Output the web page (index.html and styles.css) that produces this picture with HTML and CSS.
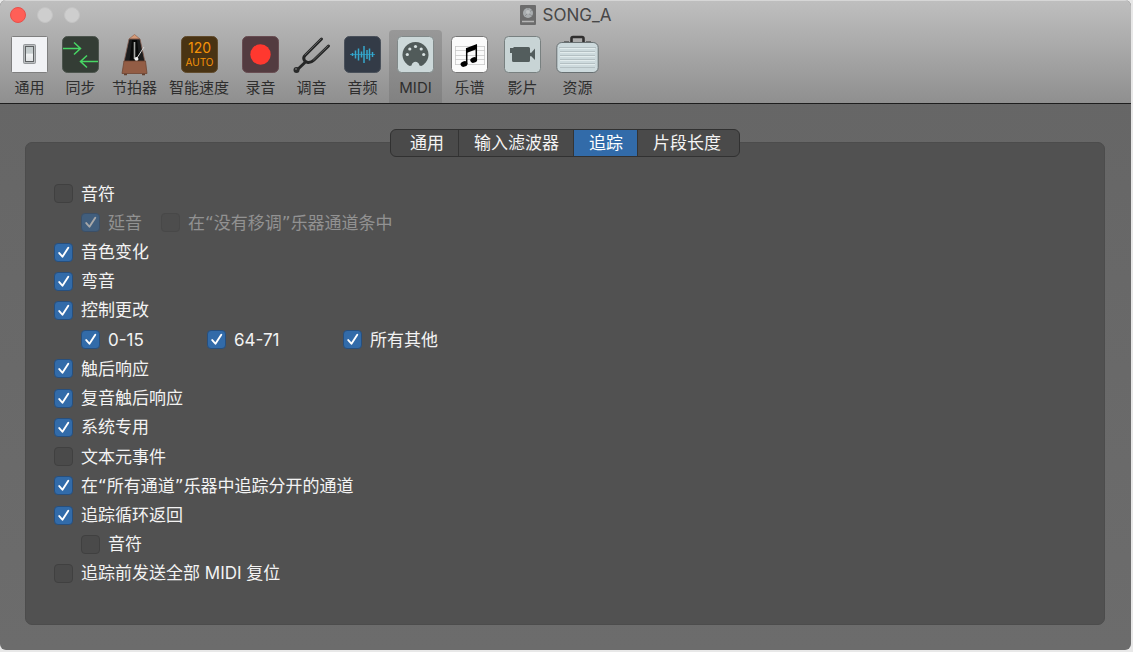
FILE: index.html
```html
<!DOCTYPE html>
<html lang="zh-CN">
<head>
<meta charset="utf-8">
<title>SONG_A</title>
<link rel="stylesheet" href="styles.css">
</head>
<body>
<main class="window">
  <header class="chrome">
    <div class="titlebar">
      <div class="lights">
        <button class="light light-close" type="button" aria-label="关闭"></button>
        <button class="light" type="button" aria-label="最小化"></button>
        <button class="light" type="button" aria-label="缩放"></button>
      </div>
      <h1 class="title">
        <svg class="title-icon" width="16" height="20" viewBox="0 0 16 20" aria-hidden="true">
          <rect width="16" height="20" rx="1" fill="#6c6c6c"/>
          <circle cx="8" cy="8" r="5" fill="#a9adaf"/>
          <path d="M8 3v5l4-3M8 8l-4 4M8 8l4 3" fill="none" stroke="#8d9092" stroke-width="1"/>
          <circle cx="8" cy="7" r="2" fill="#bfc2c3"/>
          <path d="M2 16.500h12" stroke="#b5b5b5" stroke-width="1.500"/>
        </svg>
        SONG_A
      </h1>
    </div>
    <nav class="toolbar" aria-label="偏好设置">
      <button class="tool" type="button">
        <svg class="tool-icon" viewBox="0 0 37 37" aria-hidden="true">
          <defs><linearGradient id="sw" x2="0" y2="1"><stop stop-color="#c4cccd"/><stop offset=".45" stop-color="#c8cfd0"/><stop offset=".5" stop-color="#f3f4f5"/><stop offset="1" stop-color="#e0e3e5"/></linearGradient></defs>
          <rect x=".5" y=".5" width="36" height="36" rx="1" fill="#f1f2f5" stroke="#7f7f7f"/>
          <rect x="12.500" y="8.500" width="12" height="19" rx="1" fill="#b9bcbe" stroke="#94979a"/>
          <rect x="14.500" y="10.500" width="8" height="15" fill="url(#sw)" stroke="#5d6062"/>
        </svg>
        <span class="tool-label">通用</span>
      </button>
      <button class="tool" type="button">
        <svg class="tool-icon" viewBox="0 0 37 37" aria-hidden="true">
          <rect x=".5" y=".5" width="36" height="36" rx="5" fill="#343d35" stroke="#4d554e"/>
          <path d="M1 12.500h17M12 6.500l6.500 6-6.500 6M36 25.500H19M25 19.500l-6.500 6 6.500 6" fill="none" stroke="#47d764" stroke-width="1.500"/>
        </svg>
        <span class="tool-label">同步</span>
      </button>
      <button class="tool" type="button">
        <svg class="tool-icon" viewBox="0 0 37 37" aria-hidden="true">
          <path d="M13 3l5.500-4.500L24 3z" fill="#d59a78" stroke="#8b5b43" stroke-width=".6"/>
          <path d="M13 3h11l5 23H8z" fill="#1b1c1d" stroke="#866154" stroke-width=".8"/>
          <path d="M16 4h5l2.500 21h-10z" fill="#070808"/>
          <path d="M18.500 6v17" stroke="#a5a6a4" stroke-width="1.600"/>
          <path d="M20 23.500L28 11" stroke="#d8d8d8" stroke-width="1"/>
          <circle cx="20.500" cy="23" r="2" fill="#eee"/>
          <path d="M8 25h21.500l1.500 12.500H6z" fill="#935d45" stroke="#704633" stroke-width=".8"/>
          <path d="M8 38.500h3M26 38.500h3" stroke="#63402f" stroke-width="1.500"/>
        </svg>
        <span class="tool-label">节拍器</span>
      </button>
      <button class="tool" type="button">
        <svg class="tool-icon" viewBox="0 0 37 37" aria-hidden="true">
          <rect x=".5" y=".5" width="36" height="36" rx="5" fill="#493313" stroke="#614b2d"/>
          <text class="tempo-number" x="18.500" y="17">120</text>
          <text class="tempo-mode" x="18.500" y="30">AUTO</text>
        </svg>
        <span class="tool-label">智能速度</span>
      </button>
      <button class="tool" type="button">
        <svg class="tool-icon" viewBox="0 0 37 37" aria-hidden="true">
          <rect x=".5" y=".5" width="36" height="36" rx="5" fill="#533b40" stroke="#684d52"/>
          <circle cx="18.500" cy="18.500" r="10.200" fill="#ff382f"/>
        </svg>
        <span class="tool-label">录音</span>
      </button>
      <button class="tool" type="button">
        <svg class="tool-icon" viewBox="0 0 37 37" aria-hidden="true">
          <g fill="none" stroke-linecap="round">
            <path d="M28.500 3L12 19.500C9.500 22 11 26 15 26.500c3 .3 4.500-1 6-2.500L35.500 10M13 25.500L4 34" stroke="#252626" stroke-width="3"/>
            <path d="M28 3L12 19M35 10L20.500 24" stroke="#717373" stroke-width=".7"/>
          </g>
          <circle cx="3.500" cy="34" r="3" fill="#292a2a"/>
          <circle cx="3" cy="33" r="1" fill="#696a6a"/>
        </svg>
        <span class="tool-label">调音</span>
      </button>
      <button class="tool" type="button">
        <svg class="tool-icon" viewBox="0 0 37 37" aria-hidden="true">
          <rect x=".5" y=".5" width="36" height="36" rx="5" fill="#333b47" stroke="#49505a"/>
          <path d="M6 18.500h25" stroke="#298aac" stroke-width="1"/>
          <path d="M8.500 17v3M11.500 14.500v8M14.500 12.500v12M17.500 15.500v6M20 10v17M23 14v9M25.500 12.500v12M28.500 16v5" stroke="#36a8cd" stroke-width="1.500"/>
        </svg>
        <span class="tool-label">音频</span>
      </button>
      <button class="tool tool-roomy tool-active" type="button" aria-current="page">
        <svg class="tool-icon" viewBox="0 0 37 37" aria-hidden="true">
          <rect x=".5" y=".5" width="36" height="36" rx="4" fill="#ccd8d9" stroke="#818989"/>
          <path d="M12.800 30A13 12.600 0 1 1 24.200 30L22.500 29.500C21.500 24.500 15.500 24.500 14.500 29.500z" fill="#515b5a"/>
          <g fill="#d6e0e0"><circle cx="10.300" cy="18.500" r="1.600"/><circle cx="12.800" cy="13" r="1.600"/><circle cx="18.500" cy="10.500" r="1.600"/><circle cx="24.200" cy="13" r="1.600"/><circle cx="26.700" cy="18.500" r="1.600"/></g>
        </svg>
        <span class="tool-label">MIDI</span>
      </button>
      <button class="tool tool-roomy" type="button">
        <svg class="tool-icon" viewBox="0 0 37 37" aria-hidden="true">
          <rect x=".5" y=".5" width="36" height="36" rx="4" fill="#fbfbfb" stroke="#777"/>
          <path d="M4 10.500h30M4 14.500h30M4 19.500h30M4 23.500h30M4 28.500h30M4.500 10v19M33.500 10v19" stroke="#c9c9c9" stroke-width=".8"/>
          <path d="M15.500 12L26 8v5l-10.500 4z" fill="#000"/>
          <path d="M15.700 12v16M25.300 9v14" stroke="#000" stroke-width="1.500"/>
          <ellipse cx="13" cy="28" rx="3.500" ry="2.700" transform="rotate(-18 13 28)"/>
          <ellipse cx="22.700" cy="24" rx="3.500" ry="2.700" transform="rotate(-18 22.700 24)"/>
        </svg>
        <span class="tool-label">乐谱</span>
      </button>
      <button class="tool tool-roomy" type="button">
        <svg class="tool-icon" viewBox="0 0 37 37" aria-hidden="true">
          <rect x=".5" y=".5" width="36" height="36" rx="4" fill="#c8d4d5" stroke="#788080"/>
          <path d="M6 12h3l1-1h14.500q1.500 0 1.500 1.500v4l1 .5 4-4.500v11.500l-4-4-1 .5v4q0 1.500-1.500 1.500h-15Q8 26 8 24.500V17H6z" fill="#535d5d"/>
        </svg>
        <span class="tool-label">影片</span>
      </button>
      <button class="tool" type="button">
        <svg class="tool-icon tool-icon-case" viewBox="0 0 43 37" aria-hidden="true">
          <path d="M15.500 7V2.500q0-1.500 1.500-1.500h9q1.500 0 1.500 1.500V7" fill="none" stroke="#302f2f" stroke-width="2.600"/>
          <path d="M8 6h5M30 6h5" stroke="#555" stroke-width="1.500"/>
          <rect x=".8" y="6.500" width="41.400" height="30" rx="5" fill="#cddadd" stroke="#687072"/>
          <path d="M3 11.500h37M4 15.500h35M4 19.500h35M4 23.500h35M4 27.500h35M4 31.500h35" stroke="#b4c0c3"/>
          <path d="M4 12.500h35M4 16.500h35M4 20.500h35M4 24.500h35M4 28.500h35" stroke="#e2eced"/>
        </svg>
        <span class="tool-label">资源</span>
      </button>
    </nav>
  </header>

  <section class="content">
    <div class="tabs" role="tablist">
      <button class="tab" type="button" role="tab">通用</button>
      <button class="tab" type="button" role="tab">输入滤波器</button>
      <button class="tab tab-active" type="button" role="tab" aria-selected="true">追踪</button>
      <button class="tab" type="button" role="tab">片段长度</button>
    </div>
    <form class="panel">
      <div class="row"><label class="option"><input class="check" type="checkbox">音符</label></div>
      <div class="row row-nested row-pair">
        <label class="option option-disabled"><input class="check" type="checkbox" checked disabled>延音</label>
        <label class="option option-disabled"><input class="check" type="checkbox" disabled><span>在<span class="quote">“</span>没有移调<span class="quote">”</span>乐器通道条中</span></label>
      </div>
      <div class="row"><label class="option"><input class="check" type="checkbox" checked>音色变化</label></div>
      <div class="row"><label class="option"><input class="check" type="checkbox" checked>弯音</label></div>
      <div class="row"><label class="option"><input class="check" type="checkbox" checked>控制更改</label></div>
      <div class="row row-nested row-controls">
        <label class="option"><input class="check" type="checkbox" checked>0-15</label>
        <label class="option"><input class="check" type="checkbox" checked>64-71</label>
        <label class="option"><input class="check" type="checkbox" checked>所有其他</label>
      </div>
      <div class="row"><label class="option"><input class="check" type="checkbox" checked>触后响应</label></div>
      <div class="row"><label class="option"><input class="check" type="checkbox" checked>复音触后响应</label></div>
      <div class="row"><label class="option"><input class="check" type="checkbox" checked>系统专用</label></div>
      <div class="row"><label class="option"><input class="check" type="checkbox">文本元事件</label></div>
      <div class="row"><label class="option"><input class="check" type="checkbox" checked><span>在<span class="quote">“</span>所有通道<span class="quote">”</span>乐器中追踪分开的通道</span></label></div>
      <div class="row"><label class="option"><input class="check" type="checkbox" checked>追踪循环返回</label></div>
      <div class="row row-nested"><label class="option"><input class="check" type="checkbox">音符</label></div>
      <div class="row"><label class="option"><input class="check" type="checkbox">追踪前发送全部 MIDI 复位</label></div>
    </form>
  </section>
</main>
</body>
</html>
```

FILE: styles.css
```css
* {
  box-sizing: border-box;
}

body {
  margin: 0;
  padding: 0 2px 2px 0;
  min-height: 100vh;
  display: flex;
  background: #e8e8e8;
  font-family: Inter, "Noto Sans CJK SC", sans-serif;
  font-size: 17px;
}

button {
  font: inherit;
  color: inherit;
  border: 0;
  margin: 0;
  padding: 0;
  background: none;
}

.window {
  flex: 1;
  display: flex;
  flex-direction: column;
  border-radius: 6px;
  overflow: hidden;
  background: linear-gradient(#656565, #6c6c6c);
}

.chrome {
  background: linear-gradient(#bfbfbf, #8f8f8f);
  border-bottom: 1px solid #1d1d1d;
  box-shadow: inset 0 1px #d6d6d6;
  color: #2e2e2e;
}

.titlebar {
  height: 30px;
  display: grid;
  grid-template-columns: 1fr auto 1fr;
  align-items: center;
}

.lights {
  display: flex;
  gap: 11px;
  padding-left: 10px;
}

.light {
  width: 16px;
  height: 16px;
  border-radius: 50%;
  background: #cecece;
  border: 1px solid #c4c4c4;
}

.light-close {
  background: #ff5f57;
  border-color: #e8504a;
}

.title {
  display: flex;
  align-items: center;
  gap: 7px;
  margin: 0;
  font-size: 17px;
  font-weight: 400;
  line-height: 20px;
  color: #474747;
}

.title-icon {
  display: block;
}

.toolbar {
  display: flex;
  padding-left: 4px;
}

.tool {
  display: flex;
  flex-direction: column;
  align-items: center;
  gap: 4px;
  height: 73px;
  padding: 6px 7px 0;
}

.tool-roomy {
  padding-left: 8px;
  padding-right: 8px;
}

.tool-active {
  margin: 0 1px;
  background: linear-gradient(#989898, #818181);
  border-radius: 4px 4px 0 0;
}

.tool-icon {
  display: block;
  width: 37px;
  height: 37px;
  overflow: visible;
}

.tool-icon-case {
  width: 43px;
}

.tool-label {
  margin: 0 -1px;
  font-size: 15px;
  line-height: 22px;
  white-space: nowrap;
}

.tempo-number,
.tempo-mode {
  fill: #f59208;
  text-anchor: middle;
  font-size: 14px;
}

.tempo-mode {
  font-size: 10px;
}

.content {
  flex: 1;
  display: flex;
  flex-direction: column;
  padding: 25px 26px 25px 25px;
}

.tabs {
  position: relative;
  align-self: center;
  display: flex;
  height: 28px;
  border: 1px solid #313131;
  border-radius: 6px;
  overflow: hidden;
  background: #4a4a4a;
  color: #f4f4f4;
}

.tab {
  padding: 0 14px 0 15px;
  line-height: 26px;
  border-left: 1px solid #343434;
}

.tab:first-child {
  padding-left: 19px;
  border-left: 0;
}

.tab:last-child {
  padding-right: 18px;
}

.tab-active {
  background: #326ba9;
  color: #fff;
}

.panel {
  flex: 1;
  display: flex;
  flex-direction: column;
  margin: -15px 0 0;
  padding: 36px 28px;
  border: 1px solid #4c4c4c;
  border-radius: 7px;
  background: #515151;
  color: #f3f3f3;
}

.row {
  flex: 1;
  display: flex;
  align-items: center;
}

.row-nested {
  margin-left: 27px;
}

.row-pair {
  gap: 19px;
}

.row-controls {
  display: grid;
  grid-template-columns: 126px 136px auto;
}

.option {
  display: flex;
  align-items: center;
  gap: 8px;
  line-height: 24px;
}

.option-disabled {
  color: #929292;
}

.quote {
  font-family: "DejaVu Sans", sans-serif;
}

.check {
  appearance: none;
  width: 19px;
  height: 19px;
  margin: 0;
  border: 1px solid #404040;
  border-radius: 4px;
  background: #4a4a4a;
}

.check:checked {
  border-color: #274f7d;
  background: #326ba9 url("data:image/svg+xml,%3Csvg xmlns='http://www.w3.org/2000/svg' viewBox='0 0 16 16'%3E%3Cpath d='M4 8.500L7 12L12.500 3.500' fill='none' stroke='white' stroke-width='1.800' stroke-linecap='round' stroke-linejoin='round'/%3E%3C/svg%3E") center / 17px 17px no-repeat;
}

.check:disabled {
  opacity: 0.5;
}
```
